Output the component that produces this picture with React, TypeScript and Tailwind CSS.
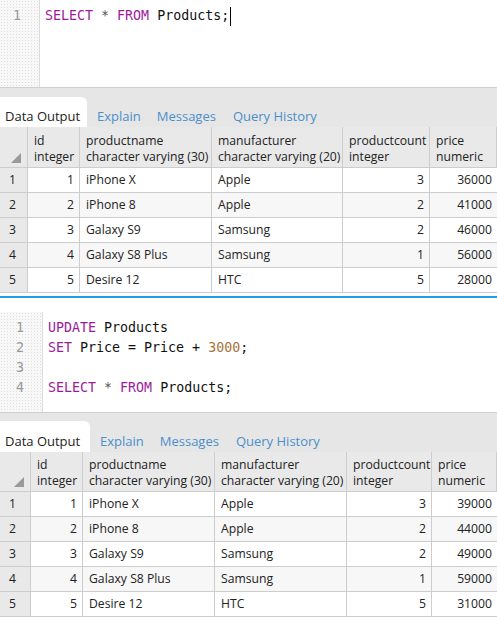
import React from "react";

type Row = [number, string, string, number, number];

const rows1: Row[] = [
  [1, "iPhone X", "Apple", 3, 36000],
  [2, "iPhone 8", "Apple", 2, 41000],
  [3, "Galaxy S9", "Samsung", 2, 46000],
  [4, "Galaxy S8 Plus", "Samsung", 1, 56000],
  [5, "Desire 12", "HTC", 5, 28000],
];
const rows2: Row[] = [
  [1, "iPhone X", "Apple", 3, 39000],
  [2, "iPhone 8", "Apple", 2, 44000],
  [3, "Galaxy S9", "Samsung", 2, 49000],
  [4, "Galaxy S8 Plus", "Samsung", 1, 59000],
  [5, "Desire 12", "HTC", 5, 31000],
];

const KW = "text-[#9b1b9b]";

function Gutter({ w, nums, pt }: { w: string; nums: number[]; pt: string }) {
  return (
    <div
      className={`${w} ${pt} h-full shrink-0 border-r border-[#dcdcdc] bg-[#f8f8f8] bg-[radial-gradient(#dedede_0.6px,transparent_0.8px)] bg-[length:3px_3px] text-right pr-[18px] text-[#999]`}
    >
      {nums.map((n) => (
        <div key={n} className="h-[20px] leading-[20px]">
          {n}
        </div>
      ))}
    </div>
  );
}

function Tabs({ tabW, h }: { tabW: string; h: string }) {
  return (
    <div className="border-t border-[#cfcfcf] bg-[#e6e6e6] h-[40px] flex items-end text-[13px] font-['Open_Sans',sans-serif]">
      <div className={`${tabW} ${h} bg-white rounded-tr-[6px] flex items-end pb-[1px] pl-[5px] text-[#222]`}>
        Data Output
      </div>
      <div className={`${h} flex items-end pb-[1px] pl-[10px] text-[#4a8fca]`}>Explain</div>
      <div className={`${h} flex items-end pb-[1px] pl-[16px] text-[#4a8fca]`}>Messages</div>
      <div className={`${h} flex items-end pb-[1px] pl-[17px] pr-[6px] text-[#4a8fca]`}>Query History</div>
    </div>
  );
}

function Table({ cols, rows, headH }: { cols: number[]; rows: Row[]; headH: string }) {
  const cell = "border-r border-b border-[#cdcdcd] shrink-0 overflow-hidden whitespace-nowrap";
  const heads: [string, string][] = [
    ["id", "integer"],
    ["productname", "character varying (30)"],
    ["manufacturer", "character varying (20)"],
    ["productcount", "integer"],
    ["price", "numeric"],
  ];
  return (
    <div className="text-[12.2px] text-[#222] font-['Open_Sans',sans-serif]">
      <div className={`flex ${headH} bg-[#e9e9e9]`}>
        <div className={`${cell} relative`} style={{ width: cols[0] }}>
          <div className="absolute right-[6px] bottom-[4px] w-0 h-0 border-l-[10px] border-l-transparent border-b-[10px] border-b-[#9a9a9a]" />
        </div>
        {heads.map((h, i) => (
          <div
            key={i}
            className={`${cell} flex flex-col justify-center pt-[3px] pl-[6px] leading-[16px]`}
            style={{ width: cols[i + 1] }}
          >
            <div>{h[0]}</div>
            <div>{h[1]}</div>
          </div>
        ))}
      </div>
      {rows.map((r, ri) => {
        const bg = ri % 2 === 1 ? "bg-[#f7f7f7]" : "bg-white";
        return (
          <div key={ri} className="flex h-[25px]">
            <div className={`${cell} bg-[#e9e9e9] flex items-center pl-[9px]`} style={{ width: cols[0] }}>
              {ri + 1}
            </div>
            <div className={`${cell} ${bg} flex items-center justify-end pr-[5px]`} style={{ width: cols[1] }}>
              {r[0]}
            </div>
            <div className={`${cell} ${bg} flex items-center pl-[6px]`} style={{ width: cols[2] }}>
              {r[1]}
            </div>
            <div className={`${cell} ${bg} flex items-center pl-[6px]`} style={{ width: cols[3] }}>
              {r[2]}
            </div>
            <div className={`${cell} ${bg} flex items-center justify-end pr-[5px]`} style={{ width: cols[4] }}>
              {r[3]}
            </div>
            <div className={`${cell} ${bg} flex items-center justify-end pr-[5px] border-r-0`} style={{ width: cols[5] }}>
              {r[4]}
            </div>
          </div>
        );
      })}
    </div>
  );
}

export default function App() {
  const mono = "font-['DejaVu_Sans_Mono',monospace] text-[13.3px]";
  return (
    <div className="w-[497px] h-[617px] overflow-hidden bg-white">
      {/* Panel 1 */}
      <div className={`flex h-[87px] ${mono}`}>
        <Gutter w="w-[40px]" nums={[1]} pt="pt-[6px]" />
        <div className="pl-[5px] pt-[6px] leading-[20px] text-[#111]">
          <div className="flex items-center">
            <span className={KW}>SELECT</span>&nbsp;<span className="text-[#555]">*</span>&nbsp;
            <span className={KW}>FROM</span>&nbsp;Products;
            <span className="inline-block w-[1px] h-[19px] bg-black ml-[1px]" />
          </div>
        </div>
      </div>
      <Tabs tabW="w-[87px]" h="h-[30px]" />
      <Table cols={[28, 52, 132, 131, 87, 67]} rows={rows1} headH="h-[41px]" />
      <div className="h-[3px]" />
      <div className="h-[2px] bg-[#1e9fe6]" />
      <div className="h-[14px]" />
      {/* Panel 2 */}
      <div className={`flex h-[100px] ${mono}`}>
        <Gutter w="w-[43px]" nums={[1, 2, 3, 4]} pt="pt-[6px]" />
        <div className="pl-[5px] pt-[6px] leading-[20px] text-[#111]">
          <div>
            <span className={KW}>UPDATE</span> Products
          </div>
          <div>
            <span className={KW}>SET</span> Price = Price + <span className="text-[#a7743c]">3000</span>;
          </div>
          <div>&nbsp;</div>
          <div>
            <span className={KW}>SELECT</span> <span className="text-[#555]">*</span> <span className={KW}>FROM</span> Products;
          </div>
        </div>
      </div>
      <Tabs tabW="w-[90px]" h="h-[31px]" />
      <Table cols={[31, 52, 132, 132, 85, 65]} rows={rows2} headH="h-[40px]" />
    </div>
  );
}
